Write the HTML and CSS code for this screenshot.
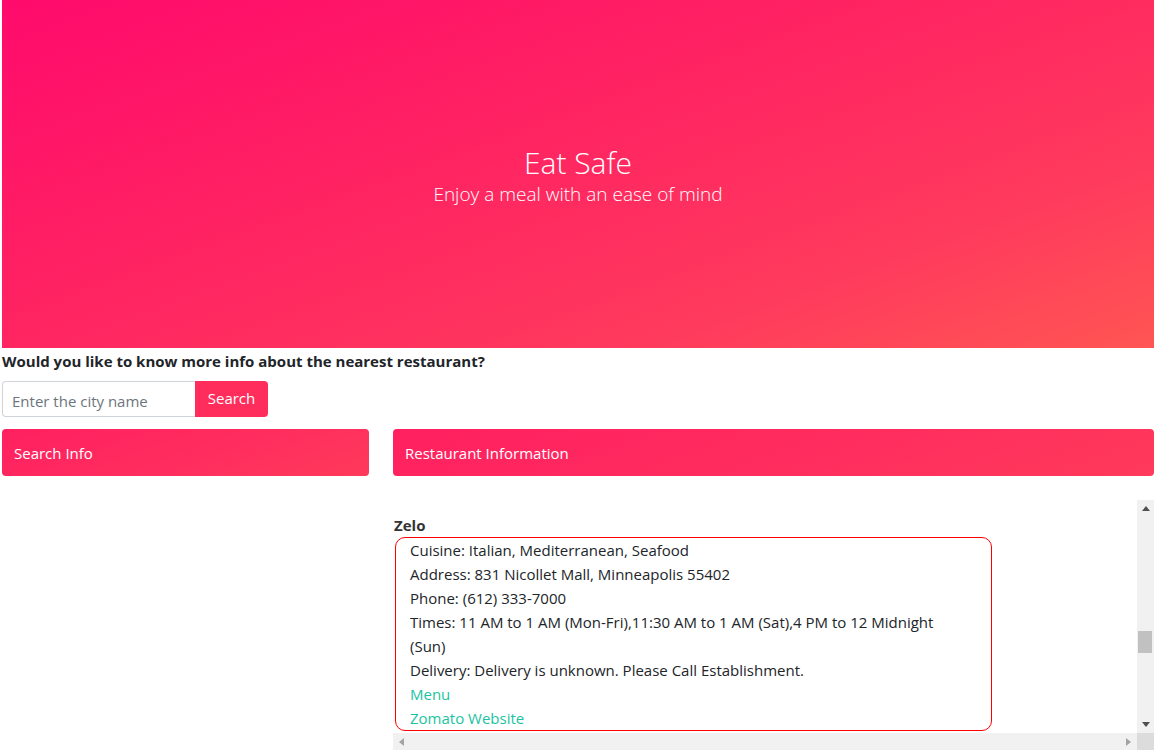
FILE: index.html
```html
<!DOCTYPE html>
<html lang="en">
<head>
<meta charset="utf-8">
<title>Eat Safe</title>
<link rel="stylesheet" href="styles.css">
</head>
<body>
<div class="page">
  <header class="hero">
    <h1 class="hero-title">Eat Safe</h1>
    <p class="hero-sub">Enjoy a meal with an ease of mind</p>
  </header>
  <p class="question">Would you like to know more info about the nearest restaurant?</p>
  <form class="search">
    <input class="search-input" type="text" placeholder="Enter the city name">
    <button class="search-btn" type="button">Search</button>
  </form>
  <div class="panels">
    <div class="card">Search Info</div>
    <div class="card">Restaurant Information</div>
    <div class="left-col"></div>
    <div class="results">
      <div class="results-view">
        <div class="restaurant">
          <h6 class="rest-name">Zelo</h6>
          <div class="rest-box">
            <div>Cuisine: Italian, Mediterranean, Seafood</div>
            <div>Address: 831 Nicollet Mall, Minneapolis 55402</div>
            <div>Phone: (612) 333-7000</div>
            <div>Times: 11 AM to 1 AM (Mon-Fri),11:30 AM to 1 AM (Sat),4 PM to 12 Midnight (Sun)</div>
            <div>Delivery: Delivery is unknown. Please Call Establishment.</div>
            <div><a class="link" href="#">Menu</a></div>
            <div><a class="link" href="#">Zomato Website</a></div>
          </div>
        </div>
      </div>
      <div class="vbar">
        <div class="sb-btn"><svg width="8" height="5" viewBox="0 0 8 5"><polygon points="0,5 4,0 8,5" fill="#505050"/></svg></div>
        <div class="vtrack"><div class="vthumb"></div></div>
        <div class="sb-btn"><svg width="8" height="5" viewBox="0 0 8 5"><polygon points="0,0 8,0 4,5" fill="#505050"/></svg></div>
      </div>
      <div class="hbar">
        <div class="sb-btn"><svg width="5" height="8" viewBox="0 0 5 8"><polygon points="5,0 5,8 0,4" fill="#a3a3a3"/></svg></div>
        <div class="htrack"></div>
        <div class="sb-btn"><svg width="5" height="8" viewBox="0 0 5 8"><polygon points="0,0 5,4 0,8" fill="#a3a3a3"/></svg></div>
      </div>
      <div class="corner"></div>
    </div>
  </div>
</div>
</body>
</html>
```
FILE: styles.css
```css
html, body {
  margin: 0;
  padding: 0;
  background: #fff;
}
body {
  font-family: "Segoe UI", "Open Sans", "Noto Sans", sans-serif;
  font-size: 15px;
  line-height: 24px;
  color: #212529;
}
.page {
  padding: 0 1px 0 2px;
}
.hero {
  height: 348px;
  background: linear-gradient(160deg, #ff0a6c 0%, #ff2262 40%, #ff3a5d 75%, #ff5553 100%);
  color: #fff;
  display: flex;
  flex-direction: column;
  align-items: center;
  justify-content: center;
  padding-top: 4px;
  box-sizing: border-box;
}
.hero-title {
  margin: 0;
  font-size: 30px;
  font-weight: 300;
  line-height: 36px;
}
.hero-sub {
  margin: 0;
  font-size: 19px;
  font-weight: 300;
  line-height: 26px;
}
.question {
  margin: 0;
  font-weight: 700;
  font-size: 15px;
  line-height: 26px;
}
.search {
  margin: 7px 0 0;
  display: flex;
  height: 36px;
}
.search-input {
  width: 193px;
  box-sizing: border-box;
  border: 1px solid #ced4da;
  border-right: none;
  border-radius: 4px 0 0 4px;
  padding: 4px 9px 0;
  font-family: inherit;
  font-size: 15px;
  color: #495057;
  outline: none;
}
.search-input::placeholder {
  color: #6c757d;
}
.search-btn {
  width: 73px;
  border: none;
  border-radius: 0 4px 4px 0;
  background: #ff2d5c;
  color: #fff;
  font-family: inherit;
  font-size: 15px;
  padding: 0 0 2px;
}
.panels {
  margin-top: 12px;
  display: grid;
  grid-template-columns: 367px 1fr;
  column-gap: 24px;
  row-gap: 24px;
}
.card {
  height: 47px;
  border-radius: 4px;
  background: linear-gradient(160deg, #ff2060 0%, #ff2e5e 60%, #ff3a5a 100%);
  color: #fff;
  font-size: 15px;
  display: flex;
  align-items: center;
  padding: 0 12px;
}
.results {
  height: 250px;
  display: grid;
  grid-template-columns: 1fr 17px;
  grid-template-rows: 1fr 17px;
}
.results-view {
  overflow: hidden;
  padding-top: 13px;
}
.vbar, .hbar {
  background: #f1f1f1;
  display: flex;
}
.vbar {
  flex-direction: column;
}
.sb-btn {
  width: 17px;
  height: 17px;
  flex: none;
  display: flex;
  align-items: center;
  justify-content: center;
}
.vtrack {
  flex: 1;
  padding: 114px 2px 0 1px;
}
.vthumb {
  height: 22px;
  background: #c1c1c1;
}
.htrack {
  flex: 1;
}
.corner {
  background: #dcdcdc;
}
.rest-name {
  margin: 0;
  padding-left: 1px;
  font-size: 15px;
  font-weight: 700;
  line-height: 24px;
  color: #333;
}
.rest-box {
  width: 597px;
  box-sizing: border-box;
  margin-left: 2px;
  border: 1px solid #ff0000;
  border-radius: 10px;
  padding: 0 24px 0 14px;
}
.link {
  color: #1cc3a2;
  text-decoration: none;
}
```
